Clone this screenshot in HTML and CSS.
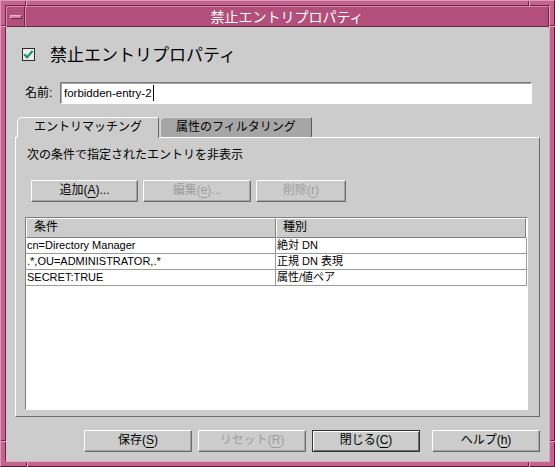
FILE: index.html
```html
<!DOCTYPE html>
<html lang="ja">
<head>
<meta charset="utf-8">
<title>禁止エントリプロパティ</title>
<link rel="stylesheet" href="styles.css">
</head>
<body>
<div class="window">
  <div class="frame-inner">
    <div class="titlebar">
      <div class="menu-btn"><span class="menu-bar"></span></div>
      <div class="title">禁止エントリプロパティ</div>
    </div>
    <div class="content">
      <div class="check-row">
        <span class="checkbox">
          <svg width="13" height="13" viewBox="0 0 13 13">
            <rect x="0.5" y="0.5" width="12" height="12" fill="#ececec" stroke="#2b2b2b"/>
            <path d="M2.3 6.3 L5 9.3 L10.6 3" fill="none" stroke="#17956c" stroke-width="2.2"/>
          </svg>
        </span>
        <span class="check-label">禁止エントリプロパティ</span>
      </div>
      <div class="name-row">
        <span class="name-label">名前:</span>
        <div class="text-field">forbidden-entry-2<span class="caret"></span></div>
      </div>
      <div class="tabs">
        <div class="tab active">エントリマッチング</div>
        <div class="tab inactive">属性のフィルタリング</div>
      </div>
      <div class="panel">
        <div class="panel-label">次の条件で指定されたエントリを非表示</div>
        <div class="btn-row">
          <div class="btn w-add">追加(<u>A</u>)...</div>
          <div class="btn w-edit disabled">編集(<u>e</u>)...</div>
          <div class="btn w-del disabled">削除(<u>r</u>)</div>
        </div>
        <div class="table">
          <div class="thead">
            <div class="th col1">条件</div>
            <div class="th col2">種別</div>
          </div>
          <div class="tr">
            <div class="td col1">cn=Directory Manager</div>
            <div class="td col2">絶対 DN</div>
          </div>
          <div class="tr">
            <div class="td col1">.*,OU=ADMINISTRATOR,.*</div>
            <div class="td col2">正規 DN 表現</div>
          </div>
          <div class="tr">
            <div class="td col1">SECRET:TRUE</div>
            <div class="td col2">属性/値ペア</div>
          </div>
        </div>
      </div>
      <div class="footer">
        <div class="btn fbtn first">保存(<u>S</u>)</div>
        <div class="btn fbtn disabled">リセット(<u>R</u>)</div>
        <div class="btn fbtn default">閉じる(<u>C</u>)</div>
        <div class="btn fbtn last">ヘルプ(<u>h</u>)</div>
      </div>
    </div>
  </div>
  <span class="notch v n-top-l"></span>
  <span class="notch v n-top-r"></span>
  <span class="notch v n-bot-l"></span>
  <span class="notch v n-bot-r"></span>
  <span class="notch h n-left-t"></span>
  <span class="notch h n-left-b"></span>
  <span class="notch h n-right-t"></span>
  <span class="notch h n-right-b"></span>
</div>
</body>
</html>
```

FILE: styles.css
```css
* { box-sizing: border-box; }
html, body { margin: 0; padding: 0; }
body {
  background: #cccccc;
  font-family: "Liberation Sans", "Noto Sans CJK JP", sans-serif;
  font-size: 12px;
  color: #000;
}

.window {
  position: relative;
  width: 555px;
  height: 467px;
  background: #c2648e;
  border: 1px solid;
  border-color: #dc98b8 #5a1434 #5a1434 #dc98b8;
  padding: 4px;
}
.frame-inner {
  height: 100%;
  border: 1px solid;
  border-color: #6e2348 #e4a6c2 #e4a6c2 #6e2348;
  display: flex;
  flex-direction: column;
}

/* title bar */
.titlebar { height: 21px; flex: none; display: flex; }
.menu-btn {
  width: 19px;
  background: #b24f7a;
  border: 1px solid;
  border-color: #d88aae #6e2348 #6e2348 #d88aae;
  display: flex;
  align-items: center;
  justify-content: center;
}
.menu-bar {
  width: 12px;
  height: 4px;
  background: #d48aaa;
  border: 1px solid;
  border-color: #eab6cc #6e2348 #6e2348 #eab6cc;
}
.title {
  flex: 1;
  background: #b24f7a;
  border: 1px solid;
  border-color: #d88aae #6e2348 #6e2348 #d88aae;
  color: #fff;
  font-family: "Noto Sans CJK JP", sans-serif;
  font-size: 14px;
  line-height: 19px;
  text-align: center;
}

/* content */
.content {
  flex: 1;
  background: #cccccc;
  padding: 0 9px;
  display: flex;
  flex-direction: column;
}

.check-row {
  margin-top: 14px;
  height: 26px;
  padding-left: 7px;
  display: flex;
  align-items: center;
}
.checkbox { width: 13px; height: 13px; display: block; }
.checkbox svg { display: block; }
.check-label {
  margin-left: 15px;
  font-family: "Noto Sans CJK JP", sans-serif;
  font-size: 17px;
  line-height: 22px;
}

.name-row {
  margin-top: 15px;
  height: 22px;
  display: flex;
  align-items: center;
}
.name-label {
  margin-left: 10px;
  width: 35px;
  font-size: 12px;
  line-height: 16px;
}
.text-field {
  width: 472px;
  height: 22px;
  background: #fff;
  border: 1px solid;
  border-color: #7a7a7a #ffffff #ffffff #7a7a7a;
  box-shadow: inset 1px 1px 0 #a8a8a8;
  padding-left: 3px;
  font-size: 11.5px;
  line-height: 20px;
  display: flex;
  align-items: center;
}
.caret {
  display: inline-block;
  width: 1px;
  height: 16px;
  background: #000;
  margin-left: 1px;
}

/* tabs */
.tabs {
  margin-top: 13px;
  height: 21px;
  margin-bottom: -1px;
  padding-left: 2px;
  display: flex;
  align-items: flex-start;
}
.tab {
  height: 21px;
  line-height: 19px;
  text-align: center;
  font-size: 12px;
  border-top-left-radius: 5px;
}
.tab.active {
  position: relative;
  z-index: 1;
  width: 142px;
  background: #cccccc;
  border-top: 1px solid #ffffff;
  border-left: 1px solid #ffffff;
  border-right: 1px solid #6b6b6b;
}
.tab.inactive {
  width: 152px;
  height: 20px;
  margin-left: 1px;
  background: #a6a6a6;
  border-top: 1px solid #d8d8d8;
  border-left: 1px solid #d8d8d8;
  border-right: 1px solid #5a5a5a;
}

.panel {
  height: 280px;
  flex: none;
  border: 1px solid;
  border-color: #ffffff #6b6b6b #6b6b6b #ffffff;
  padding-top: 9px;
  display: flex;
  flex-direction: column;
}
.panel-label {
  padding-left: 11px;
  height: 16px;
  line-height: 16px;
  font-size: 12px;
}
.btn-row {
  margin-top: 17px;
  padding-left: 15px;
  display: flex;
  gap: 5px;
}

.btn {
  height: 22px;
  border: 1px solid;
  border-color: #ffffff #6b6b6b #6b6b6b #ffffff;
  box-shadow: inset -1px -1px 0 #a4a4a4;
  background: #cccccc;
  text-align: center;
  line-height: 19px;
  font-size: 12px;
  white-space: nowrap;
}
.btn u { text-underline-offset: 3px; }
.btn.disabled { color: #9e9e9e; }
.w-add { width: 107px; }
.w-edit { width: 108px; }
.w-del { width: 90px; }

/* table */
.table {
  margin-top: 15px;
  margin-left: 9px;
  width: 503px;
  height: 193px;
  background: #fff;
  border: 1px solid;
  border-color: #7f7f7f #ffffff #ffffff #7f7f7f;
}
.thead {
  display: flex;
  height: 20px;
  margin-right: 1px;
}
.th {
  height: 20px;
  background: #cccccc;
  border: 1px solid;
  border-color: #ffffff #7f7f7f #7f7f7f #ffffff;
  font-size: 12px;
  line-height: 17px;
}
.th.col1 { width: 250px; padding-left: 7px; }
.th.col2 { flex: 1; padding-left: 6px; }
.tr {
  display: flex;
  height: 16px;
  border-bottom: 1px solid #9b9b9b;
}
.td {
  height: 15px;
  border-right: 1px solid #9b9b9b;
  font-size: 11px;
  line-height: 15px;
  padding-left: 1px;
  white-space: nowrap;
}
.td.col1 { width: 250px; }
.td.col2 { flex: 1; }

/* footer */
.footer {
  margin-top: 13px;
  height: 22px;
  display: flex;
  padding-left: 69px;
}
.fbtn { width: 108px; margin-left: 6px; }
.fbtn.first { margin-left: 0; }
.fbtn.last { margin-left: 12px; }
.fbtn.default {
  border: 1px solid #333333;
  box-shadow: inset 1px 1px 0 #ffffff, inset -1px -1px 0 #6b6b6b;
}

/* frame resize notches */
.notch { position: absolute; display: block; }
.notch.v { width: 2px; height: 5px; border-left: 1px solid #6e2348; border-right: 1px solid #e4a6c2; }
.notch.h { width: 5px; height: 2px; border-top: 1px solid #6e2348; border-bottom: 1px solid #e4a6c2; }
.n-top-l { left: 24px; top: 0; }
.n-top-r { left: 527px; top: 0; }
.n-bot-l { left: 25px; top: 461px; }
.n-bot-r { left: 527px; top: 461px; }
.n-left-t { left: 0; top: 24px; }
.n-left-b { left: 0; top: 439px; }
.n-right-t { left: 549px; top: 24px; }
.n-right-b { left: 549px; top: 439px; }
```
